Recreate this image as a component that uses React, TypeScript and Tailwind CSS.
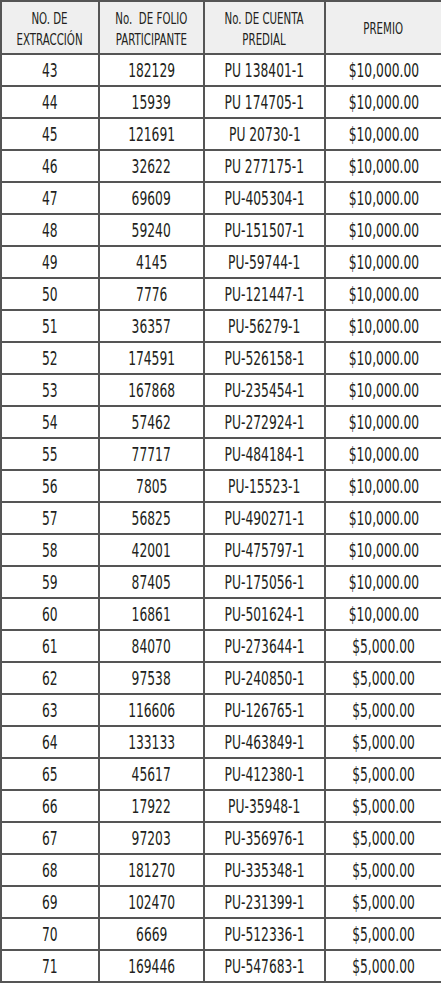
const rows: [number, string, string, string][] = [
  [43, '182129', 'PU 138401-1', '$10,000.00'],
  [44, '15939', 'PU 174705-1', '$10,000.00'],
  [45, '121691', 'PU 20730-1', '$10,000.00'],
  [46, '32622', 'PU 277175-1', '$10,000.00'],
  [47, '69609', 'PU-405304-1', '$10,000.00'],
  [48, '59240', 'PU-151507-1', '$10,000.00'],
  [49, '4145', 'PU-59744-1', '$10,000.00'],
  [50, '7776', 'PU-121447-1', '$10,000.00'],
  [51, '36357', 'PU-56279-1', '$10,000.00'],
  [52, '174591', 'PU-526158-1', '$10,000.00'],
  [53, '167868', 'PU-235454-1', '$10,000.00'],
  [54, '57462', 'PU-272924-1', '$10,000.00'],
  [55, '77717', 'PU-484184-1', '$10,000.00'],
  [56, '7805', 'PU-15523-1', '$10,000.00'],
  [57, '56825', 'PU-490271-1', '$10,000.00'],
  [58, '42001', 'PU-475797-1', '$10,000.00'],
  [59, '87405', 'PU-175056-1', '$10,000.00'],
  [60, '16861', 'PU-501624-1', '$10,000.00'],
  [61, '84070', 'PU-273644-1', '$5,000.00'],
  [62, '97538', 'PU-240850-1', '$5,000.00'],
  [63, '116606', 'PU-126765-1', '$5,000.00'],
  [64, '133133', 'PU-463849-1', '$5,000.00'],
  [65, '45617', 'PU-412380-1', '$5,000.00'],
  [66, '17922', 'PU-35948-1', '$5,000.00'],
  [67, '97203', 'PU-356976-1', '$5,000.00'],
  [68, '181270', 'PU-335348-1', '$5,000.00'],
  [69, '102470', 'PU-231399-1', '$5,000.00'],
  [70, '6669', 'PU-512336-1', '$5,000.00'],
  [71, '169446', 'PU-547683-1', '$5,000.00'],
]

const font = { fontFamily: '"DejaVu Sans Condensed", "Liberation Sans", sans-serif' }

// condensed look: the source face is narrower than anything installed
function N({ children }: { children: React.ReactNode }) {
  return <span className="inline-block scale-x-[0.72] whitespace-nowrap">{children}</span>
}

function H({ children }: { children: React.ReactNode }) {
  return <span className="inline-block scale-x-[0.76] whitespace-nowrap">{children}</span>
}

export default function App() {
  return (
    <div className="w-[441px] bg-white" style={font}>
      <table className="w-[441px] table-fixed border-collapse border-2 border-[#555] text-center text-[#231f20]">
        <colgroup>
          <col className="w-[98px]" />
          <col className="w-[105px]" />
          <col className="w-[121px]" />
          <col className="w-[117px]" />
        </colgroup>
        <thead>
          <tr className="h-[53px] bg-[#efefef] text-[15px] leading-[21px]">
            <th className="border-2 border-[#555] pt-1 font-normal"><H>NO. DE<br />EXTRACCIÓN</H></th>
            <th className="border-2 border-[#555] pt-1 font-normal"><H>No.&nbsp; DE FOLIO<br />PARTICIPANTE</H></th>
            <th className="border-2 border-[#555] pt-1 font-normal"><H>No. DE CUENTA<br />PREDIAL</H></th>
            <th className="border-2 border-[#555] pt-1 font-normal"><H>PREMIO</H></th>
          </tr>
        </thead>
        <tbody className="text-[19px] leading-[24px]">
          {rows.map(([n, folio, cuenta, premio]) => (
            <tr key={n} className="h-[32px]">
              <td className="border-2 border-[#555]"><N>{n}</N></td>
              <td className="border-2 border-[#555]"><N>{folio}</N></td>
              <td className="border-2 border-[#555]"><N>{cuenta}</N></td>
              <td className="border-2 border-[#555]"><N>{premio}</N></td>
            </tr>
          ))}
        </tbody>
      </table>
    </div>
  )
}
